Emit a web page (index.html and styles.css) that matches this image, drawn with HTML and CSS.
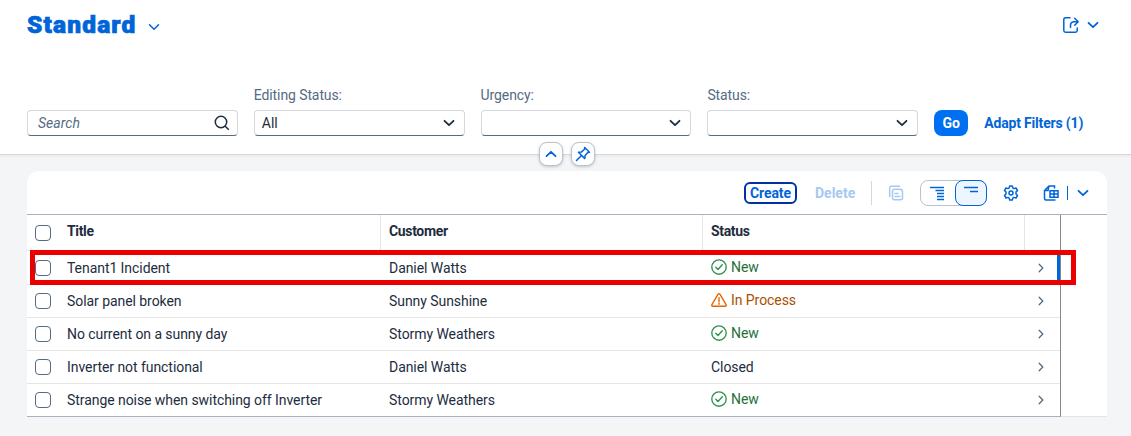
FILE: index.html
```html
<!DOCTYPE html>
<html lang="en">
<head>
<meta charset="utf-8">
<title>Incidents</title>
<link rel="stylesheet" href="styles.css">
</head>
<body>
<svg class="defs" width="0" height="0">
  <symbol id="down" viewBox="0 0 12 12"><path d="M1.500 3.800 6 8.200l4.500-4.400"/></symbol>
  <symbol id="ok" viewBox="0 0 16 16"><circle cx="8" cy="8" r="7.200"/><path d="M4.800 8.300 7 10.500l4.300-4.700"/></symbol>
  <symbol id="warn" viewBox="0 0 16 16"><path d="M7.100 2.200.9 12.700q-.5 1.500 1 1.600h12.200q1.500-.1 1-1.600L8.900 2.200q-.9-1-1.800 0zM8 5.800v4M8 11.200v1"/></symbol>
</svg>
<header class="header">
  <div class="titlebar">
    <h1 class="title">Standard</h1>
    <svg class="icon chevron title-chevron"><use href="#down"/></svg>
    <div class="share">
      <svg class="icon share-icon" viewBox="0 0 18 18"><path d="M8 1.800H3.500Q1.800 1.800 1.800 3.500v11q0 1.700 1.700 1.700h10q1.700 0 1.700-1.700V12M8.500 11.500V9.500q0-3.800 3.800-3.800h3.500M12.700 2.200 16.200 5.700l-3.500 3.500"/></svg>
      <svg class="icon chevron bold"><use href="#down"/></svg>
    </div>
  </div>
  <div class="filters">
    <div class="field"><div class="input search"><span>Search</span>
      <svg class="icon search-icon" viewBox="0 0 16 16"><circle cx="7" cy="7" r="5.700"/><path d="m11.200 11.200 3.100 3.100"/></svg></div></div>
    <div class="field"><label class="label">Editing Status:</label><div class="input"><span>All</span><svg class="icon chevron bold"><use href="#down"/></svg></div></div>
    <div class="field"><label class="label">Urgency:</label><div class="input"><span></span><svg class="icon chevron bold"><use href="#down"/></svg></div></div>
    <div class="field"><label class="label">Status:</label><div class="input"><span></span><svg class="icon chevron bold"><use href="#down"/></svg></div></div>
    <button class="go">Go</button>
    <span class="adapt">Adapt Filters (1)</span>
  </div>
  <div class="handles">
    <button class="handle"><svg class="icon chevron bold up"><use href="#down"/></svg></button>
    <button class="handle"><svg class="icon pin" viewBox="0 0 16 16"><path d="m9.700 1.500 4.800 4.800-1.700.2-2.700 2.900-.3 3.200-6.400-6.400 3.200-.3 2.900-2.700zM6.500 9.500l-5 5"/></svg></button>
  </div>
</header>
<main class="panel">
  <div class="toolbar">
    <button class="create">Create</button>
    <span class="delete">Delete</span>
    <i class="divider"></i>
    <svg class="icon copy" viewBox="0 0 16 16"><path d="M1.700 11.500V3q0-1.800 1.800-1.800h8M6.500 4.200H12q2.500 0 2.500 2.500v6q0 2-2 2h-6q-2 0-2-2v-6.500q0-2 2-2zM7 8.500h3M7 11.500h5"/></svg>
    <div class="segments">
      <div class="segment"><svg class="icon" viewBox="0 0 16 16"><path d="M1 2.500h14M6.500 5.500h8.500M8 8.500h7M8 11.500h7M8 14.500h7"/></svg></div>
      <div class="segment selected"><svg class="icon" viewBox="0 0 16 16"><path d="M1 2.500h14M7 6.500h8"/></svg></div>
    </div>
    <svg class="icon gear" viewBox="0 0 16 16"><path d="M6.700.9h2.600l.5 2 1.200.7 2-.6 1.500 2.500-1.500 1.600v1.800l1.500 1.600-1.500 2.500-2-.6-1.200.7-.5 2H6.700l-.5-2-1.200-.7-2 .6-1.500-2.500L3 8.900V7.100L1.500 5.500 3 3l2 .6 1.200-.7z"/><circle cx="8" cy="8" r="2"/></svg>
    <svg class="icon export" viewBox="0 0 16 16"><path d="M11.500 3.500V1H6L1.500 5.500v8q0 1.500 1.500 1.500h9.500M1.500 5.500H5L6 1M7 5.700h8v6.600H7zM7 9h8M11 5.700v6.600"/></svg>
    <i class="split"></i>
    <svg class="icon chevron bold"><use href="#down"/></svg>
  </div>
  <div class="content">
    <div class="table">
      <div class="row head"><span><i class="check"></i></span><span>Title</span><span>Customer</span><span>Status</span><span></span></div>
      <div class="row first"><span><i class="check"></i></span><span>Tenant1 Incident</span><span>Daniel Watts</span><span class="state new"><svg class="icon"><use href="#ok"/></svg>New</span><span class="nav"><svg class="icon"><use href="#down"/></svg></span></div>
      <div class="row"><span><i class="check"></i></span><span>Solar panel broken</span><span>Sunny Sunshine</span><span class="state process"><svg class="icon"><use href="#warn"/></svg>In Process</span><span class="nav"><svg class="icon"><use href="#down"/></svg></span></div>
      <div class="row"><span><i class="check"></i></span><span>No current on a sunny day</span><span>Stormy Weathers</span><span class="state new"><svg class="icon"><use href="#ok"/></svg>New</span><span class="nav"><svg class="icon"><use href="#down"/></svg></span></div>
      <div class="row"><span><i class="check"></i></span><span>Inverter not functional</span><span>Daniel Watts</span><span>Closed</span><span class="nav"><svg class="icon"><use href="#down"/></svg></span></div>
      <div class="row last"><span><i class="check"></i></span><span>Strange noise when switching off Inverter</span><span>Stormy Weathers</span><span class="state new"><svg class="icon"><use href="#ok"/></svg>New</span><span class="nav"><svg class="icon"><use href="#down"/></svg></span></div>
      <div class="highlight"></div>
    </div>
  </div>
</main>
</body>
</html>
```
FILE: styles.css
```css
* { box-sizing: border-box; }
body { margin: 0; height: 436px; overflow: hidden; background: #f4f5f7; color: #1d2d3e; font: 14px/18px Roboto, "Noto Sans", sans-serif; }
button { font: inherit; padding: 0; margin: 0; }
.defs { display: block; position: absolute; }
.icon { display: block; flex: none; width: 16px; height: 16px; fill: none; stroke: currentColor; stroke-width: 1.5; stroke-linecap: round; stroke-linejoin: round; }
.chevron { width: 12px; height: 12px; }
.bold { stroke-width: 1.8; }
.header { position: relative; height: 155px; padding: 0 27px; background: #fff; border-bottom: 1px solid #d9d9d9; box-shadow: 0 1px 3px #0001; }
.titlebar { display: flex; align-items: center; height: 49px; color: #0064d9; }
.title { width: 110px; margin: 0; font: 900 24.5px/28px Roboto, sans-serif; letter-spacing: 1.15px; -webkit-text-stroke: .7px #0064d9; }
.title-chevron { margin: 4px 0 0 11px; }
.share { display: flex; align-items: center; gap: 7px; margin-left: auto; margin-right: 5px; }
.share-icon { width: 18px; height: 18px; }
.filters { display: flex; align-items: flex-end; gap: 16px; height: 87px; }
.field { width: 210.8px; }
.label { display: block; color: #556b82; height: 24px; letter-spacing: -.1px; }
.input { display: flex; align-items: center; justify-content: space-between; height: 26px; padding: 0 9px 0 7px; border: 1px solid #d5d8df; border-bottom-color: #556b82; border-radius: 4px; background: #fff; }
.input span { letter-spacing: -.05px; }
.search { padding: 0 7px 0 10px; }
.search span { color: #556b82; font-style: italic; letter-spacing: .05px; }
.go { width: 34px; height: 26px; border: 0; border-radius: 8px; background: #0070f2; color: #fff; font-weight: 700; }
.adapt { height: 26px; line-height: 26px; color: #0064d9; font-weight: 700; letter-spacing: -.17px; }
.handles { position: absolute; left: 539px; top: 142px; display: flex; gap: 8px; }
.handle { display: flex; align-items: center; justify-content: center; width: 24px; height: 24px; border: 1px solid #bcc3ca; border-radius: 8px; background: #fff; color: #0064d9; box-shadow: 0 1px 3px #0003; }
.up { transform: rotate(180deg); }
.panel { width: 1080px; margin: 16px 0 0 27px; background: #fff; border-radius: 12px 12px 0 0; }
.toolbar { display: flex; align-items: center; height: 44px; padding-right: 18px; justify-content: flex-end; border-bottom: 1px solid #a8b3bf; color: #0064d9; }
.create { width: 53px; height: 22px; border: 2px solid #0032a5; border-radius: 6px; background: #fff; color: #0064d9; font-weight: 700; line-height: 18px; letter-spacing: -.1px; }
.delete { width: 41px; margin-left: 18px; color: #a6c9f2; font-weight: 700; white-space: nowrap; }
.divider { width: 1px; height: 24px; margin: 0 17px 0 15px; background: #d9d9d9; }
.copy { color: #a6c9f2; margin-left: -1px; margin-right: 16px; }
.segments { display: flex; width: 67px; height: 26px; border: 1px solid #bcc3ca; border-radius: 8px; }
.segment { display: flex; align-items: center; justify-content: center; width: 34px; padding-right: 2px; }
.segment .icon, .export { stroke-linecap: butt; stroke-linejoin: miter; }
.segments .selected { width: 32px; margin: -1px -1px -1px 0; padding: 0; border: 1px solid #0064d9; border-radius: 8px; background: #edf6ff; }
.gear { margin-left: 16px; }
.export { margin-left: 24px; }
.split { width: 1px; height: 14px; margin: 0 9px 0 8px; background: #0064d9; }
.content { height: 202px; border-bottom: 1px solid #e5e5e5; }
.table { position: relative; width: 1034px; height: 202px; border-right: 1px solid #888; border-bottom: 1px solid #a8b3bf; }
.row { display: grid; grid-template-columns: 32px 322px 322px 322px 35px; height: 33px; border-bottom: 1px solid #e5e5e5; }
.row > span { display: flex; align-items: center; padding-left: 8px; white-space: nowrap; letter-spacing: -.06px; }
.row.first { height: 34px; }
.row.last { height: 32px; border-bottom: 0; }
.row.head { height: 36px; font-weight: 700; }
.head > span { padding-bottom: 3px; letter-spacing: -.35px; }
.head > span:first-child { padding-bottom: 0; }
.head > span:nth-child(n+2):not(:last-child) { border-right: 1px solid #e5e5e5; }
.check { width: 16px; height: 16px; border: 1px solid #556b82; border-radius: 4px; background: #fff; }
.row > .state { gap: 4px; padding-bottom: 2px; }
.new { color: #256f3a; }
.new .icon { color: #30914c; stroke-width: 1.35; }
.process { color: #aa4f00; }
.process .icon { color: #e76500; stroke-width: 1.4; }
.row > .nav { padding: 0 0 0 11px; color: #556b82; }
.nav .icon { width: 10px; height: 10px; transform: rotate(-90deg); }
.highlight { position: absolute; left: 3px; top: 35px; width: 1046px; height: 35px; border: 5px solid #eb0000; }
.highlight::before { content: ""; position: absolute; left: 1022px; top: 0; width: 3px; height: 25px; background: #0064d9; }
```
